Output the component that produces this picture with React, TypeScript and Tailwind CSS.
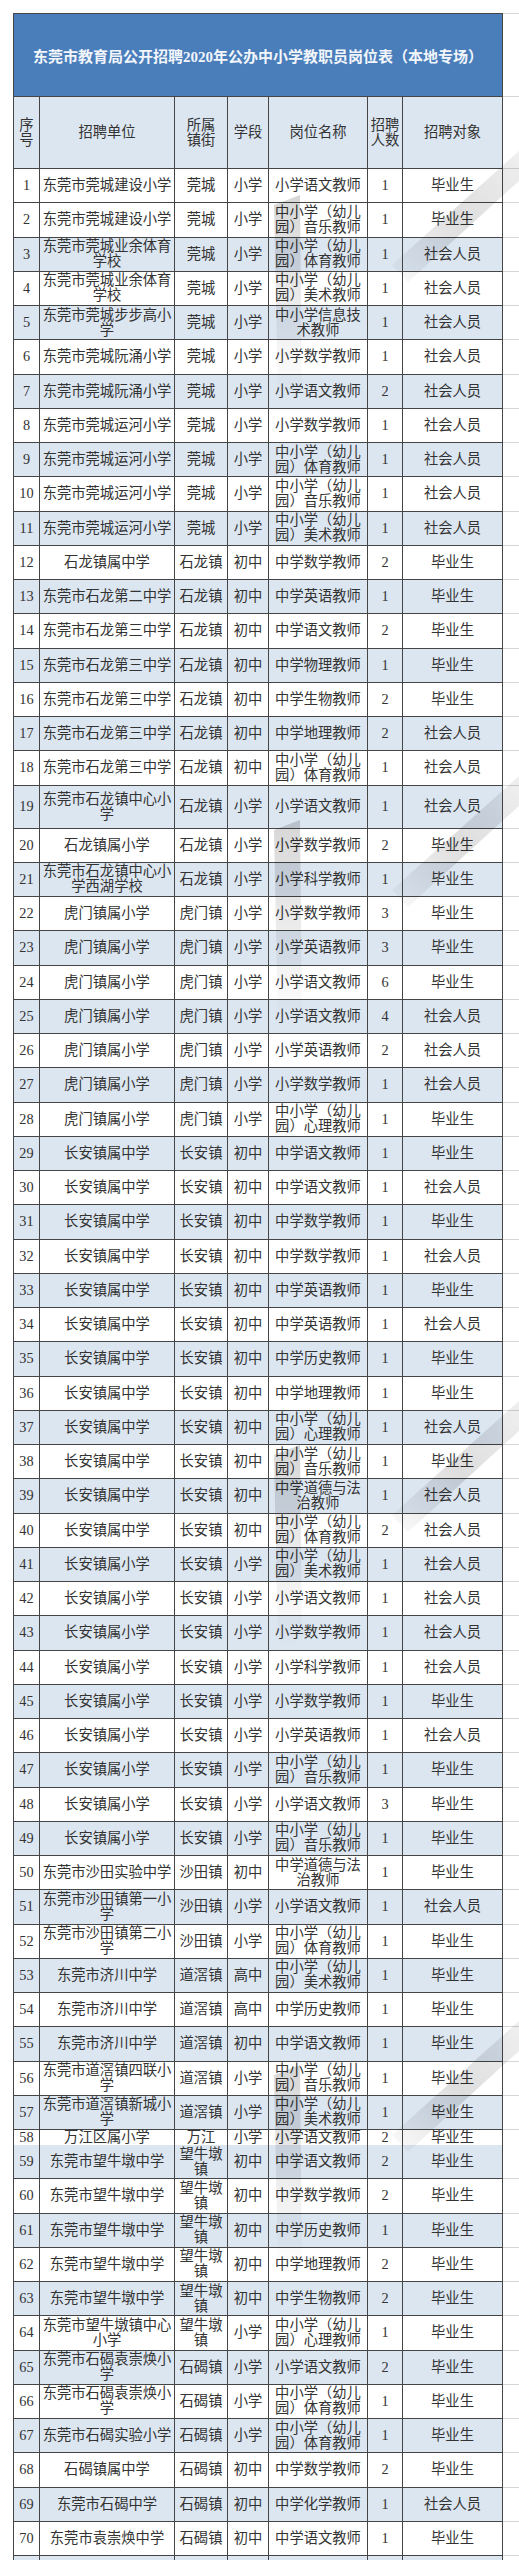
import React from "react";

type Row = [string, string, string, string, number, string];

const rows: Row[] = [
  ["东莞市莞城建设小学", "莞城", "小学", "小学语文教师", 1, "毕业生"],
  ["东莞市莞城建设小学", "莞城", "小学", "中小学（幼儿园）音乐教师", 1, "毕业生"],
  ["东莞市莞城业余体育学校", "莞城", "小学", "中小学（幼儿园）体育教师", 1, "社会人员"],
  ["东莞市莞城业余体育学校", "莞城", "小学", "中小学（幼儿园）美术教师", 1, "社会人员"],
  ["东莞市莞城步步高小学", "莞城", "小学", "中小学信息技术教师", 1, "社会人员"],
  ["东莞市莞城阮涌小学", "莞城", "小学", "小学数学教师", 1, "社会人员"],
  ["东莞市莞城阮涌小学", "莞城", "小学", "小学语文教师", 2, "社会人员"],
  ["东莞市莞城运河小学", "莞城", "小学", "小学数学教师", 1, "社会人员"],
  ["东莞市莞城运河小学", "莞城", "小学", "中小学（幼儿园）体育教师", 1, "社会人员"],
  ["东莞市莞城运河小学", "莞城", "小学", "中小学（幼儿园）音乐教师", 1, "社会人员"],
  ["东莞市莞城运河小学", "莞城", "小学", "中小学（幼儿园）美术教师", 1, "社会人员"],
  ["石龙镇属中学", "石龙镇", "初中", "中学数学教师", 2, "毕业生"],
  ["东莞市石龙第二中学", "石龙镇", "初中", "中学英语教师", 1, "毕业生"],
  ["东莞市石龙第三中学", "石龙镇", "初中", "中学语文教师", 2, "毕业生"],
  ["东莞市石龙第三中学", "石龙镇", "初中", "中学物理教师", 1, "毕业生"],
  ["东莞市石龙第三中学", "石龙镇", "初中", "中学生物教师", 2, "毕业生"],
  ["东莞市石龙第三中学", "石龙镇", "初中", "中学地理教师", 2, "社会人员"],
  ["东莞市石龙第三中学", "石龙镇", "初中", "中小学（幼儿园）体育教师", 1, "社会人员"],
  ["东莞市石龙镇中心小学", "石龙镇", "小学", "小学语文教师", 1, "社会人员"],
  ["石龙镇属小学", "石龙镇", "小学", "小学数学教师", 2, "毕业生"],
  ["东莞市石龙镇中心小学西湖学校", "石龙镇", "小学", "小学科学教师", 1, "毕业生"],
  ["虎门镇属小学", "虎门镇", "小学", "小学数学教师", 3, "毕业生"],
  ["虎门镇属小学", "虎门镇", "小学", "小学英语教师", 3, "毕业生"],
  ["虎门镇属小学", "虎门镇", "小学", "小学语文教师", 6, "毕业生"],
  ["虎门镇属小学", "虎门镇", "小学", "小学语文教师", 4, "社会人员"],
  ["虎门镇属小学", "虎门镇", "小学", "小学英语教师", 2, "社会人员"],
  ["虎门镇属小学", "虎门镇", "小学", "小学数学教师", 1, "社会人员"],
  ["虎门镇属小学", "虎门镇", "小学", "中小学（幼儿园）心理教师", 1, "毕业生"],
  ["长安镇属中学", "长安镇", "初中", "中学语文教师", 1, "毕业生"],
  ["长安镇属中学", "长安镇", "初中", "中学语文教师", 1, "社会人员"],
  ["长安镇属中学", "长安镇", "初中", "中学数学教师", 1, "毕业生"],
  ["长安镇属中学", "长安镇", "初中", "中学数学教师", 1, "社会人员"],
  ["长安镇属中学", "长安镇", "初中", "中学英语教师", 1, "毕业生"],
  ["长安镇属中学", "长安镇", "初中", "中学英语教师", 1, "社会人员"],
  ["长安镇属中学", "长安镇", "初中", "中学历史教师", 1, "毕业生"],
  ["长安镇属中学", "长安镇", "初中", "中学地理教师", 1, "毕业生"],
  ["长安镇属中学", "长安镇", "初中", "中小学（幼儿园）心理教师", 1, "社会人员"],
  ["长安镇属中学", "长安镇", "初中", "中小学（幼儿园）音乐教师", 1, "毕业生"],
  ["长安镇属中学", "长安镇", "初中", "中学道德与法治教师", 1, "社会人员"],
  ["长安镇属中学", "长安镇", "初中", "中小学（幼儿园）体育教师", 2, "社会人员"],
  ["长安镇属小学", "长安镇", "小学", "中小学（幼儿园）美术教师", 1, "社会人员"],
  ["长安镇属小学", "长安镇", "小学", "小学语文教师", 1, "社会人员"],
  ["长安镇属小学", "长安镇", "小学", "小学数学教师", 1, "社会人员"],
  ["长安镇属小学", "长安镇", "小学", "小学科学教师", 1, "社会人员"],
  ["长安镇属小学", "长安镇", "小学", "小学数学教师", 1, "毕业生"],
  ["长安镇属小学", "长安镇", "小学", "小学英语教师", 1, "社会人员"],
  ["长安镇属小学", "长安镇", "小学", "中小学（幼儿园）音乐教师", 1, "毕业生"],
  ["长安镇属小学", "长安镇", "小学", "小学语文教师", 3, "毕业生"],
  ["长安镇属小学", "长安镇", "小学", "中小学（幼儿园）音乐教师", 1, "毕业生"],
  ["东莞市沙田实验中学", "沙田镇", "初中", "中学道德与法治教师", 1, "毕业生"],
  ["东莞市沙田镇第一小学", "沙田镇", "小学", "小学语文教师", 1, "社会人员"],
  ["东莞市沙田镇第二小学", "沙田镇", "小学", "中小学（幼儿园）体育教师", 1, "毕业生"],
  ["东莞市济川中学", "道滘镇", "高中", "中小学（幼儿园）美术教师", 1, "毕业生"],
  ["东莞市济川中学", "道滘镇", "高中", "中学历史教师", 1, "毕业生"],
  ["东莞市济川中学", "道滘镇", "初中", "中学语文教师", 1, "毕业生"],
  ["东莞市道滘镇四联小学", "道滘镇", "小学", "中小学（幼儿园）音乐教师", 1, "毕业生"],
  ["东莞市道滘镇新城小学", "道滘镇", "小学", "中小学（幼儿园）美术教师", 1, "毕业生"],
  ["万江区属小学", "万江", "小学", "小学语文教师", 2, "毕业生"],
  ["东莞市望牛墩中学", "望牛墩镇", "初中", "中学语文教师", 2, "毕业生"],
  ["东莞市望牛墩中学", "望牛墩镇", "初中", "中学数学教师", 2, "毕业生"],
  ["东莞市望牛墩中学", "望牛墩镇", "初中", "中学历史教师", 1, "毕业生"],
  ["东莞市望牛墩中学", "望牛墩镇", "初中", "中学地理教师", 2, "毕业生"],
  ["东莞市望牛墩中学", "望牛墩镇", "初中", "中学生物教师", 2, "毕业生"],
  ["东莞市望牛墩镇中心小学", "望牛墩镇", "小学", "中小学（幼儿园）心理教师", 1, "毕业生"],
  ["东莞市石碣袁崇焕小学", "石碣镇", "小学", "小学语文教师", 2, "毕业生"],
  ["东莞市石碣袁崇焕小学", "石碣镇", "小学", "中小学（幼儿园）体育教师", 1, "毕业生"],
  ["东莞市石碣实验小学", "石碣镇", "小学", "中小学（幼儿园）体育教师", 1, "毕业生"],
  ["石碣镇属中学", "石碣镇", "初中", "中学数学教师", 2, "毕业生"],
  ["东莞市石碣中学", "石碣镇", "初中", "中学化学教师", 1, "社会人员"],
  ["东莞市袁崇焕中学", "石碣镇", "初中", "中学语文教师", 1, "毕业生"],
];

const GRID =
  "grid grid-cols-[13px_27px_135px_53px_41px_99px_35px_100px_16px]";
const CELL =
  "flex items-center justify-center text-center px-[2px] leading-[15px] border-r border-b border-[#454545]";

function heightFor(n: number) {
  if (n === 19) return "h-[43px]";
  if (n === 58) return "h-[15px]";
  return "h-[34.25px]";
}

function DataRow({ n, r }: { n: number; r: Row }) {
  const bg = n >= 3 && n % 2 === 1 ? "bg-[#dce6f1]" : "bg-white";
  return (
    <div className={`${GRID} ${heightFor(n)}`}>
      <div className="bg-white" />
      <div className={`${CELL} ${bg} border-l`}>{n}</div>
      <div className={`${CELL} ${bg}`}>{r[0]}</div>
      <div className={`${CELL} ${bg}`}>{r[1]}</div>
      <div className={`${CELL} ${bg}`}>{r[2]}</div>
      <div className={`${CELL} ${bg}`}>{r[3]}</div>
      <div className={`${CELL} ${bg}`}>{r[4]}</div>
      <div className={`${CELL} ${bg}`}>{r[5]}</div>
      <div className="border-b border-[#d6d6d6] bg-white" />
    </div>
  );
}

function Watermark() {
  const offsets = [0, 625, 1250, 1870];
  return (
    <svg
      className="pointer-events-none absolute left-0 top-0"
      width="519"
      height="2560"
      viewBox="0 0 519 2560"
    >
      <defs>
        <linearGradient id="wmv" x1="0" y1="0" x2="0" y2="1">
          <stop offset="0" stopColor="#000" stopOpacity="0.16" />
          <stop offset="1" stopColor="#000" stopOpacity="0" />
        </linearGradient>
        <linearGradient id="wmd" x1="0" y1="1" x2="1" y2="0">
          <stop offset="0" stopColor="#000" stopOpacity="0.02" />
          <stop offset="0.5" stopColor="#000" stopOpacity="0.13" />
          <stop offset="1" stopColor="#000" stopOpacity="0.06" />
        </linearGradient>
      </defs>
      {offsets.map((o, i) => (
        <g key={i}>
          <polygon
            points={`274,${205 + o} 300,${195 + o} 302,${400 + o} 278,${400 + o}`}
            fill="url(#wmv)"
          />
          <polygon
            points={`392,${265 + o} 520,${150 + o} 520,${180 + o} 408,${282 + o}`}
            fill="url(#wmd)"
          />
          <polygon
            points={`396,${850 - 625 + o + 0} 500,${755 - 625 + o} 512,${768 - 625 + o} 410,${862 - 625 + o}`}
            fill="url(#wmd)"
            opacity="0"
          />
        </g>
      ))}
    </svg>
  );
}

export default function App() {
  return (
    <div
      className="relative w-[519px] h-[2560px] overflow-hidden bg-white pt-[13px] text-[14.3px] text-[#333333]"
      style={{
        fontFamily:
          '"Liberation Serif", "Noto Sans CJK SC", "Noto Sans", sans-serif',
      }}
    >
      {/* title */}
      <div className="flex">
        <div className="w-[13px]" />
        <div className="flex h-[84px] w-[490px] items-center justify-center border border-[#454545] bg-[#4a7ebb] pt-1 text-[15px] font-bold text-[#f2f6fb]">
          东莞市教育局公开招聘2020年公办中小学教职员岗位表（本地专场）
        </div>
        <div className="h-[84px] w-[16px] border-t border-b border-[#d6d6d6]" />
      </div>
      {/* header */}
      <div className={`${GRID} h-[72px]`}>
        <div className="bg-white" />
        <div className={`${CELL} border-l bg-[#dce6f1]`}>序号</div>
        <div className={`${CELL} bg-[#dce6f1]`}>招聘单位</div>
        <div className={`${CELL} bg-[#dce6f1]`}>
          所属
          <br />
          镇街
        </div>
        <div className={`${CELL} bg-[#dce6f1]`}>学段</div>
        <div className={`${CELL} bg-[#dce6f1]`}>岗位名称</div>
        <div className={`${CELL} bg-[#dce6f1]`}>
          招聘
          <br />
          人数
        </div>
        <div className={`${CELL} bg-[#dce6f1]`}>招聘对象</div>
        <div className="border-b border-[#d6d6d6] bg-white" />
      </div>
      {rows.map((r, i) => (
        <DataRow key={i} n={i + 1} r={r} />
      ))}
      <div className={`${GRID} h-[20px]`}>
        <div className="bg-white" />
        <div className={`${CELL} border-l bg-[#dce6f1]`} />
        <div className={`${CELL} bg-[#dce6f1]`} />
        <div className={`${CELL} bg-[#dce6f1]`} />
        <div className={`${CELL} bg-[#dce6f1]`} />
        <div className={`${CELL} bg-[#dce6f1]`} />
        <div className={`${CELL} bg-[#dce6f1]`} />
        <div className={`${CELL} bg-[#dce6f1]`} />
        <div className="bg-white" />
      </div>
      <Watermark />
    </div>
  );
}
